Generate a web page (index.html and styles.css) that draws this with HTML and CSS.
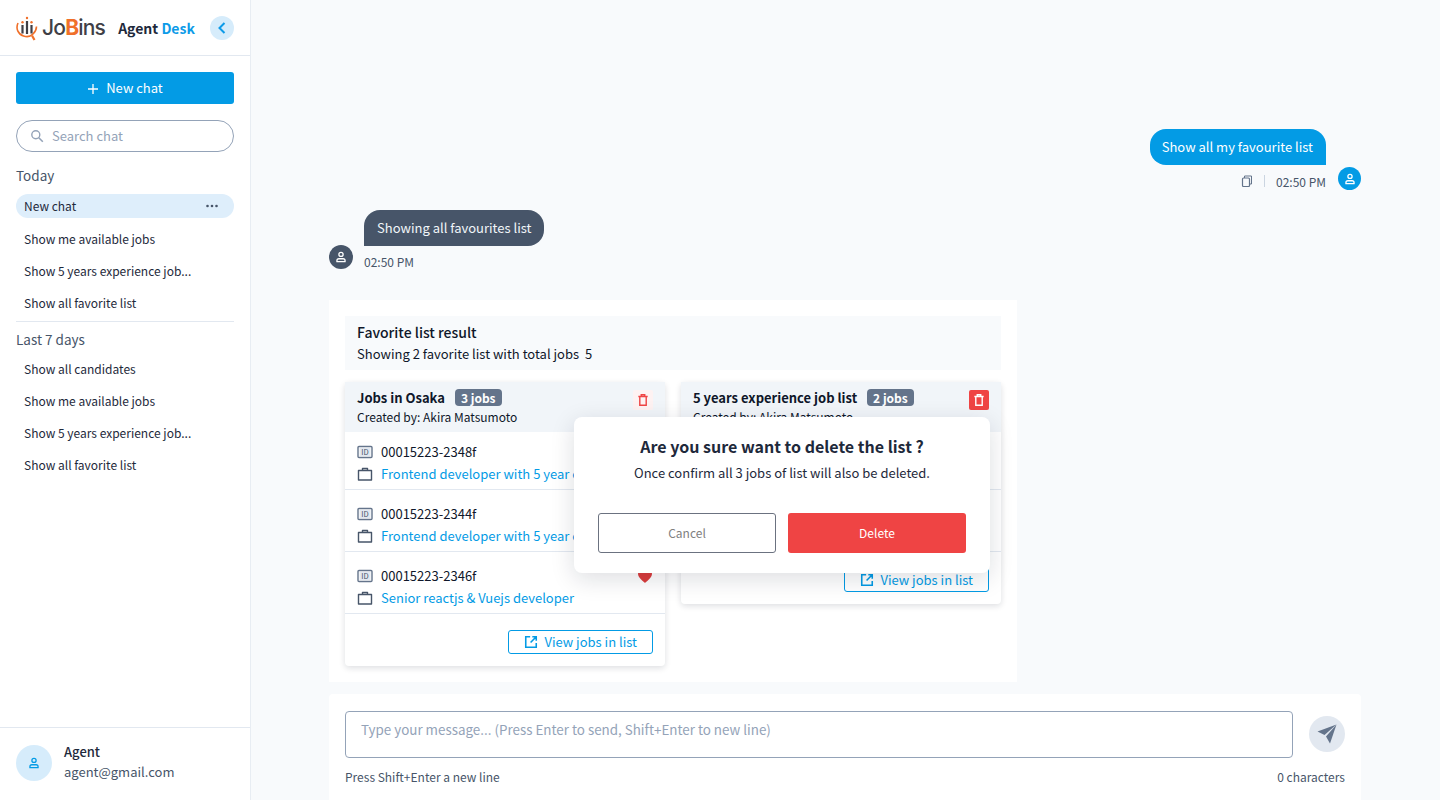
FILE: index.html
```html
<!DOCTYPE html>
<html lang="en">
<head>
    <meta charset="UTF-8">
    <title>JoBins Agent Desk</title>
    <link rel="stylesheet" href="styles.css">
</head>
<body>
    <svg class="icon-defs" width="0" height="0">
        <defs>
            <symbol id="user" viewBox="0 0 24 24">
                <circle cx="12" cy="7.5" r="3.6" fill="none" stroke="currentColor" stroke-width="2.200"/>
                <path d="M5 20v-1.500c0-2 1.500-3.500 3.500-3.500h7c2 0 3.500 1.500 3.500 3.500V20z" fill="none" stroke="currentColor" stroke-width="2.200" stroke-linejoin="round"/>
            </symbol>
            <symbol id="trash" viewBox="0 0 24 24">
                <path d="M4 6h16M9 5V3h6v2M6.500 6.500V21h11V6.500" fill="none" stroke="currentColor" stroke-width="2.400"/>
            </symbol>
            <symbol id="idcard" viewBox="0 0 16 14">
                <rect x="1" y="1.500" width="14" height="11" rx="1" fill="none" stroke="#64748b" stroke-width="1.400"/>
                <rect x="2.500" y="3" width="11" height="8" fill="#e2e8f0"/>
                <text x="8" y="9.700" text-anchor="middle" font-size="7.500" font-weight="400" fill="#475569">ID</text>
            </symbol>
            <symbol id="case" viewBox="0 0 16 16">
                <path d="M5.500 4.500V2.500h5v2M1.500 4.500h13v9.500h-13z" fill="none" stroke="#475569" stroke-width="1.400" stroke-linejoin="round"/>
            </symbol>
            <symbol id="open" viewBox="0 0 16 16">
                <path d="M7 2H2v12h12V9M9.500 2H14v4.500M14 2L7.500 8.500" fill="none" stroke="currentColor" stroke-width="1.800"/>
            </symbol>
        </defs>
    </svg>

    <aside class="sidebar">
        <div class="brand">
            <svg class="brand-mark" width="26" height="26" viewBox="0 0 26 26">
                <path d="M2 8C-.500 13.500 2 19 7.500 21c3.500 1.200 7 .500 9.500-2 2-2 3.500-4.500 3.500-7.500" fill="none" stroke="#f0702a" stroke-width="1.600"/>
                <path d="M16 20.500l2.500 4.500" stroke="#f0702a" stroke-width="2.200"/>
                <path d="M6.500 10v8.500M11 6v13M15.500 10v8.500" stroke="#3f3f46" stroke-width="2.200"/>
                <circle cx="6.500" cy="7.300" r="1.200" fill="#f0702a"/>
                <circle cx="15.500" cy="7.300" r="1.200" fill="#f0702a"/>
                <circle cx="11" cy="3" r="1.200" fill="#f0702a"/>
            </svg>
            <span class="brand-name">Jo<b>B</b>ins</span>
            <span class="brand-desk">Agent <em>Desk</em></span>
            <button class="collapse">
                <svg width="12" height="14" viewBox="0 0 12 14"><path d="M8.500 2L3.500 7l5 5" fill="none" stroke="#0d9be8" stroke-width="2"/></svg>
            </button>
        </div>

        <div class="side-top">
            <button class="new-chat">
                <svg width="12" height="12" viewBox="0 0 12 12"><path d="M6 1v10M1 6h10" stroke="#fff" stroke-width="1.300"/></svg>
                New chat
            </button>
            <div class="search">
                <svg width="14" height="14" viewBox="0 0 14 14"><circle cx="5.800" cy="5.800" r="4" fill="none" stroke="#94a3b8" stroke-width="1.400"/><path d="M8.800 8.800l4 4" stroke="#94a3b8" stroke-width="1.600"/></svg>
                <span>Search chat</span>
            </div>
        </div>

        <div class="history">
            <h4>Today</h4>
            <div class="chat-item active">New chat
                <svg class="dots" width="12" height="4" viewBox="0 0 12 4"><circle cx="1.500" cy="2" r="1.300"/><circle cx="6" cy="2" r="1.300"/><circle cx="10.500" cy="2" r="1.300"/></svg>
            </div>
            <div class="chat-item">Show me available jobs</div>
            <div class="chat-item">Show 5 years experience job...</div>
            <div class="chat-item">Show all favorite list</div>
            <hr>
            <h4>Last 7 days</h4>
            <div class="chat-item">Show all candidates</div>
            <div class="chat-item">Show me available jobs</div>
            <div class="chat-item">Show 5 years experience job...</div>
            <div class="chat-item">Show all favorite list</div>
        </div>

        <div class="profile">
            <div class="profile-pic"><svg width="14" height="14"><use href="#user"/></svg></div>
            <div class="profile-text">
                <div class="profile-name">Agent</div>
                <div class="profile-mail">agent@gmail.com</div>
            </div>
        </div>
    </aside>

    <main class="main">
        <section class="chat">
            <div class="msg-out">
                <div class="msg-out-body">
                    <div class="bubble bubble-out">Show all my favourite list</div>
                    <div class="meta">
                        <svg width="12" height="12" viewBox="0 0 12 12"><path d="M3.500 3V1h7v8h-2" fill="none" stroke="#64748b" stroke-width="1"/><rect x="1.500" y="3" width="7" height="8.500" rx="1" fill="none" stroke="#64748b" stroke-width="1.200"/></svg>
                        <i class="sep"></i>
                        <span>02:50 PM</span>
                    </div>
                </div>
                <div class="avatar avatar-out"><svg width="14" height="14"><use href="#user"/></svg></div>
            </div>

            <div class="msg-in">
                <div class="avatar avatar-in"><svg width="14" height="14"><use href="#user"/></svg></div>
                <div>
                    <div class="bubble bubble-in">Showing all favourites list</div>
                    <div class="meta meta-in">02:50 PM</div>
                </div>
            </div>

            <div class="result">
                <div class="result-head">
                    <strong>Favorite list result</strong>
                    <span>Showing 2 favorite list with total jobs &nbsp;5</span>
                </div>
                <div class="cards">
                    <div class="card">
                        <div class="card-head">
                            <div>
                                <div class="card-title">Jobs in Osaka <span class="count">3 jobs</span></div>
                                <div class="card-by">Created by: Akira Matsumoto</div>
                            </div>
                            <button class="del"><svg width="14" height="14"><use href="#trash"/></svg></button>
                        </div>
                        <div class="job">
                            <div class="job-line"><svg width="16" height="14"><use href="#idcard"/></svg>00015223-2348f</div>
                            <div class="job-line job-link"><svg width="16" height="16"><use href="#case"/></svg><a>Frontend developer with 5 year experience</a></div>
                        </div>
                        <div class="job">
                            <div class="job-line"><svg width="16" height="14"><use href="#idcard"/></svg>00015223-2344f</div>
                            <div class="job-line job-link"><svg width="16" height="16"><use href="#case"/></svg><a>Frontend developer with 5 year experience</a></div>
                        </div>
                        <div class="job">
                            <svg class="heart" width="14" height="13" viewBox="0 0 14 13"><path d="M7 13C5.500 11.500 0 8 0 3.800 0 1.500 1.700 0 3.700 0 5 0 6.300.700 7 2 7.700.700 9 0 10.300 0 12.300 0 14 1.500 14 3.800 14 8 8.500 11.500 7 13z" fill="#dc3d3d"/></svg>
                            <div class="job-line"><svg width="16" height="14"><use href="#idcard"/></svg>00015223-2346f</div>
                            <div class="job-line job-link"><svg width="16" height="16"><use href="#case"/></svg><a>Senior reactjs &amp; Vuejs developer</a></div>
                        </div>
                        <div class="card-foot">
                            <button class="view"><svg width="14" height="14"><use href="#open"/></svg>View jobs in list</button>
                        </div>
                    </div>

                    <div class="card">
                        <div class="card-head">
                            <div>
                                <div class="card-title">5 years experience job list <span class="count">2 jobs</span></div>
                                <div class="card-by">Created by: Akira Matsumoto</div>
                            </div>
                            <button class="del del-on"><svg width="14" height="14"><use href="#trash"/></svg></button>
                        </div>
                        <div class="job"></div>
                        <div class="job"></div>
                        <div class="card-foot">
                            <button class="view"><svg width="14" height="14"><use href="#open"/></svg>View jobs in list</button>
                        </div>
                    </div>
                </div>

                <div class="confirm">
                    <h3>Are you sure want to delete the list ?</h3>
                    <p>Once confirm all 3 jobs of list will also be deleted.</p>
                    <div class="confirm-btns">
                        <button class="btn-cancel">Cancel</button>
                        <button class="btn-delete">Delete</button>
                    </div>
                </div>
            </div>
        </section>

        <section class="composer">
            <div class="composer-row">
                <div class="composer-input">Type your message... (Press Enter to send, Shift+Enter to new line)</div>
                <button class="send">
                    <svg width="20" height="20" viewBox="0 0 20 20"><path d="M19.500.500L.500 7.500l7 3.500z" fill="#64748b"/><path d="M19.500.500L13 19.500 9 12.500z" fill="#64748b"/></svg>
                </button>
            </div>
            <div class="composer-foot">
                <span>Press Shift+Enter a new line</span>
                <span>0 characters</span>
            </div>
        </section>
    </main>
</body>
</html>
```

FILE: styles.css
```css
* {
    box-sizing: border-box;
}

body {
    margin: 0;
    height: 100vh;
    display: flex;
    overflow: hidden;
    background-color: #f8fafc;
    color: #1e293b;
    font-family: "Noto Sans CJK JP", "Noto Sans", sans-serif;
    font-size: 13px;
}

button {
    font-family: inherit;
    cursor: pointer;
}

.icon-defs {
    position: absolute;
}

/* sidebar */
.sidebar {
    width: 251px;
    flex-shrink: 0;
    display: flex;
    flex-direction: column;
    background-color: #fff;
    border-right: 1px solid #e8edf3;
}

.brand {
    height: 56px;
    display: flex;
    align-items: center;
    padding: 0 16px;
    border-bottom: 1px solid #e2e8f0;
}

.brand-name {
    font-family: "Inter", sans-serif;
    font-weight: 500;
    font-size: 21px;
    letter-spacing: -0.8px;
    color: #3f3f46;
    margin-right: 13px;
}

.brand-name b {
    color: #f0702a;
    font-weight: 700;
}

.brand-desk {
    font-size: 14px;
    font-weight: 700;
    color: #1e293b;
}

.brand-desk em {
    font-style: normal;
    color: #0d9be8;
}

.collapse {
    width: 24px;
    height: 24px;
    margin-left: auto;
    padding: 0;
    display: flex;
    align-items: center;
    justify-content: center;
    border: none;
    border-radius: 50%;
    background-color: #d6ecfb;
}

.side-top {
    padding: 16px 16px 0;
}

.new-chat {
    width: 100%;
    height: 32px;
    padding-bottom: 2px;
    display: flex;
    align-items: center;
    justify-content: center;
    gap: 7px;
    border: none;
    border-radius: 3px;
    background-color: #039be5;
    color: #fff;
    font-size: 13px;
}

.new-chat svg {
    margin-top: 2px;
}

.search {
    height: 32px;
    margin-top: 16px;
    padding: 0 13px 2px;
    display: flex;
    align-items: center;
    gap: 8px;
    border: 1px solid #94a3b8;
    border-radius: 16px;
    color: #94a3b8;
}

.search svg {
    margin-top: 2px;
}

.history {
    flex: 1;
    padding: 13px 16px 0;
}

.history h4 {
    margin: 0 0 3px;
    font-size: 13.500px;
    font-weight: 400;
    line-height: 20px;
    color: #475569;
}

.history hr {
    margin: 3px 0 7px;
    border: none;
    border-top: 1px solid #e2e8f0;
}

.chat-item {
    height: 32px;
    padding: 0 8px;
    display: flex;
    align-items: center;
    justify-content: space-between;
    font-size: 12px;
    color: #1e293b;
}

.chat-item.active {
    height: 24px;
    margin-top: 9px;
    margin-bottom: 4px;
    padding-bottom: 2px;
    border-radius: 12px;
    background-color: #deeefb;
}

.dots {
    margin-top: 2px;
    margin-right: 8px;
    fill: #475569;
}

.profile {
    height: 73px;
    padding: 0 16px 3px;
    display: flex;
    align-items: center;
    gap: 12px;
    border-top: 1px solid #e2e8f0;
}

.profile-pic {
    width: 36px;
    height: 36px;
    display: flex;
    align-items: center;
    justify-content: center;
    border-radius: 50%;
    background-color: #d6ecfb;
    color: #039be5;
}

.profile-text {
    margin-top: -2px;
}

.profile-name {
    font-weight: 500;
    line-height: 20px;
}

.profile-mail {
    color: #475569;
    line-height: 20px;
}

/* chat */
.main {
    flex: 1;
    min-width: 0;
    display: flex;
    flex-direction: column;
    padding: 0 79px 0 78px;
}

.chat {
    flex: 1;
    min-height: 0;
    padding-top: 129px;
}

.msg-out {
    display: flex;
    justify-content: flex-end;
    align-items: flex-end;
    gap: 12px;
}

.msg-out-body {
    display: flex;
    flex-direction: column;
    align-items: flex-end;
}

.bubble {
    height: 36px;
    display: flex;
    align-items: center;
    color: #fff;
    font-size: 13px;
}

.bubble-out {
    padding: 0 13px 2px 12px;
    background-color: #039be5;
    border-radius: 16px 16px 0 16px;
}

.bubble-in {
    width: fit-content;
    padding: 0 12px 2px 13px;
    background-color: #475569;
    border-radius: 16px 16px 16px 0;
    color: #f1f5f9;
}

.meta {
    height: 26px;
    display: flex;
    align-items: flex-end;
    gap: 11px;
    font-size: 12px;
    line-height: 18px;
    color: #475569;
}

.meta svg {
    margin-bottom: 4px;
}

.sep {
    width: 1px;
    height: 12px;
    margin-bottom: 4px;
    background-color: #cbd5e1;
}

.avatar {
    width: 23px;
    height: 23px;
    display: flex;
    align-items: center;
    justify-content: center;
    border-radius: 50%;
    color: #fff;
}

.avatar-out {
    margin-bottom: 1px;
    background-color: #039be5;
}

.avatar-in {
    width: 24px;
    height: 24px;
    margin-bottom: 2px;
    background-color: #475569;
}

.msg-in {
    margin-top: 19px;
    display: flex;
    align-items: flex-end;
    gap: 11px;
}

.meta-in {
    height: 25px;
}

.result {
    position: relative;
    width: 688px;
    margin-top: 29px;
    padding: 16px;
    background-color: #fff;
}

.result-head {
    height: 54px;
    padding: 0 12px;
    display: flex;
    flex-direction: column;
    justify-content: center;
    background-color: #f8fafc;
    color: #0f172a;
    font-size: 13px;
    line-height: 21px;
}

.result-head strong {
    font-size: 14px;
    font-weight: 500;
}

.cards {
    margin-top: 12px;
    display: flex;
    align-items: flex-start;
    gap: 16px;
}

.card {
    width: 320px;
    border-radius: 4px;
    background-color: #fff;
    box-shadow: 0 2px 6px rgba(15, 23, 42, 0.14);
}

.card-head {
    height: 50px;
    padding: 6px 12px 0;
    display: flex;
    justify-content: space-between;
    background-color: #f1f5f9;
}

.card-title {
    font-size: 13px;
    font-weight: 700;
    line-height: 20px;
    color: #0f172a;
}

.count {
    margin-left: 7px;
    padding: 0 6px;
    border-radius: 4px;
    background-color: #64748b;
    color: #fff;
    font-size: 12px;
}

.card-by {
    margin-top: -1px;
    font-size: 12px;
    line-height: 19px;
    color: #0f172a;
}

.del {
    width: 20px;
    height: 20px;
    margin-top: 2px;
    padding: 0;
    display: flex;
    align-items: center;
    justify-content: center;
    border: none;
    border-radius: 2px;
    background-color: #fef2f2;
    color: #ef4444;
}

.del-on {
    background-color: #ef4444;
    color: #fff;
}

.job {
    position: relative;
    height: 62px;
    padding: 13px 12px 0;
    border-bottom: 1px solid #e2e8f0;
}

.card-head + .job {
    height: 58px;
    padding-top: 9px;
}

.job-line {
    height: 22px;
    padding-bottom: 2px;
    display: flex;
    align-items: center;
    gap: 8px;
    font-size: 13px;
    color: #0f172a;
    white-space: nowrap;
}

.job-line svg {
    flex-shrink: 0;
    margin-top: 2px;
}

.job-link a {
    color: #039be5;
}

.heart {
    position: absolute;
    top: 18px;
    right: 13px;
}

.card-foot {
    height: 52px;
    padding: 16px 12px 0;
    display: flex;
    justify-content: flex-end;
}

.view {
    height: 24px;
    padding: 0 15px 2px;
    display: flex;
    align-items: center;
    gap: 6px;
    border: 1px solid #039be5;
    border-radius: 3px;
    background-color: #fff;
    color: #039be5;
    font-size: 13px;
}

.view svg {
    margin-top: 2px;
}

.confirm {
    position: absolute;
    top: 117px;
    left: 245px;
    width: 416px;
    height: 156px;
    padding: 15px 24px 0;
    border-radius: 8px;
    background-color: #fff;
    box-shadow: 0 6px 24px rgba(15, 23, 42, 0.14);
    text-align: center;
}

.confirm h3 {
    margin: 0;
    font-size: 16px;
    font-weight: 700;
    line-height: 28px;
    color: #1e293b;
}

.confirm p {
    margin: 3px 0 0;
    font-size: 13px;
    line-height: 20px;
    color: #1e293b;
}

.confirm-btns {
    margin-top: 30px;
    display: flex;
    gap: 12px;
}

.confirm-btns button {
    height: 40px;
    padding-bottom: 2px;
    border-radius: 3px;
    font-size: 12px;
}

.btn-cancel {
    width: 178px;
    border: 1px solid #6b7280;
    background-color: #fff;
    color: #808080;
}

.btn-delete {
    width: 178px;
    border: none;
    background-color: #ef4444;
    color: #fff;
}

/* composer */
.composer {
    height: 106px;
    flex-shrink: 0;
    padding: 17px 16px 0;
    border-radius: 4px 4px 0 0;
    background-color: #fff;
}

.composer-row {
    display: flex;
    align-items: center;
    gap: 16px;
}

.composer-input {
    flex: 1;
    height: 47px;
    padding: 7px 15px;
    border: 1px solid #94a3b8;
    border-radius: 4px;
    color: #94a3b8;
    font-size: 13.400px;
    line-height: 20px;
}

.send {
    width: 36px;
    height: 36px;
    margin-top: -1px;
    padding: 0;
    display: flex;
    align-items: center;
    justify-content: center;
    border: none;
    border-radius: 50%;
    background-color: #e2e8f0;
}

.composer-foot {
    margin-top: 10px;
    display: flex;
    justify-content: space-between;
    font-size: 12px;
    line-height: 18px;
    color: #475569;
}
```
